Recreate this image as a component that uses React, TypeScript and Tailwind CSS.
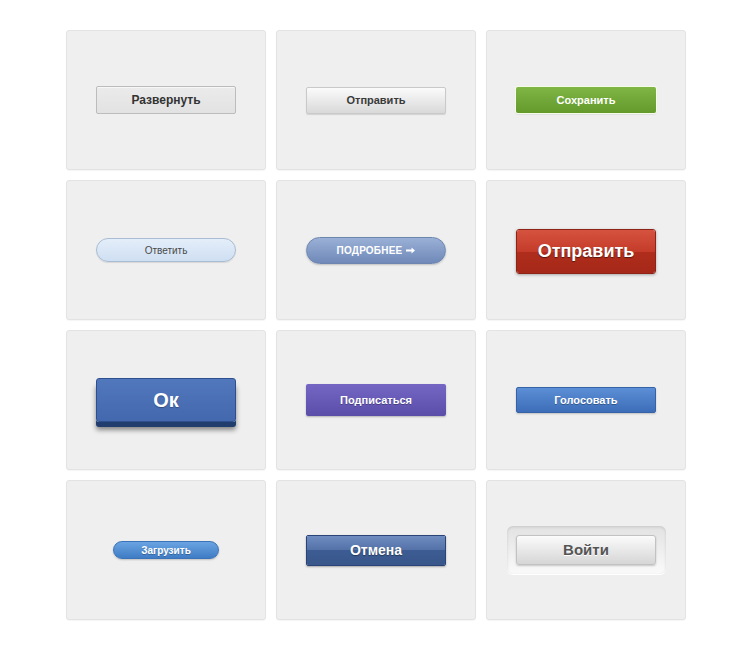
import React from 'react';

const font = { fontFamily: '"Liberation Sans", Arial, sans-serif' };

function Card({ children }: { children: React.ReactNode }) {
  return (
    <div className="h-[140px] rounded-[3px] border border-[#e3e3e3] bg-[#efefef] shadow-[0_1px_1px_rgba(0,0,0,0.04)] flex items-center justify-center">
      {children}
    </div>
  );
}

// short heavy right arrow used in the pill button
function Arrow() {
  return (
    <svg width="9" height="7" viewBox="0 0 9 7" className="inline-block ml-[4px] align-[0px]">
      <path d="M0 2.6h5.5V0.5L9 3.5 5.5 6.5V4.4H0z" fill="#fff" />
    </svg>
  );
}

export default function App() {
  return (
    <div className="w-[750px] h-[654px] bg-white pt-[30px] pl-[66px]" style={font}>
      <div className="grid grid-cols-[200px_200px_200px] auto-rows-[140px] gap-x-[10px] gap-y-[10px]">
        {/* row 1 */}
        <Card>
          <button className="w-[140px] h-[28px] rounded-[2px] border border-[#bcbcbc] bg-gradient-to-b from-[#ebebeb] to-[#e2e2e2] text-[12px] font-bold text-[#333] shadow-[inset_0_1px_0_#f7f7f7]">
            Развернуть
          </button>
        </Card>
        <Card>
          <button className="w-[140px] h-[27px] rounded-[2px] border border-[#c9c9c9] bg-gradient-to-b from-[#fbfbfb] to-[#d9d9d9] text-[11px] font-bold text-[#3a3a3a] shadow-[0_1px_1px_rgba(0,0,0,0.12)]">
            Отправить
          </button>
        </Card>
        <Card>
          <button className="w-[140px] h-[26px] rounded-[2px] bg-gradient-to-b from-[#7fb644] to-[#64992c] text-[11px] font-bold text-white shadow-[0_0_0_1px_#f6fbe9,0_1px_2px_rgba(0,0,0,0.2)]">
            Сохранить
          </button>
        </Card>

        {/* row 2 */}
        <Card>
          <button className="w-[140px] h-[24px] rounded-full border border-[#a9bcd3] bg-gradient-to-b from-[#e4eefa] to-[#cfdff2] text-[10px] text-[#4a4a4a] shadow-[0_1px_1px_rgba(0,0,0,0.1)]">
            Ответить
          </button>
        </Card>
        <Card>
          <button className="w-[140px] h-[27px] rounded-full border border-[#6d86b0] bg-gradient-to-b from-[#9ab0d6] to-[#6f89b8] text-[10px] font-bold text-white tracking-[0.2px] shadow-[0_1px_2px_rgba(0,0,0,0.2)]">
            ПОДРОБНЕЕ<Arrow />
          </button>
        </Card>
        <Card>
          <button className="relative w-[140px] h-[45px] mt-[3px] rounded-[3px] overflow-hidden border border-[#8e2418] text-[18px] font-bold text-white shadow-[0_1px_3px_rgba(0,0,0,0.3)] [text-shadow:0_1px_1px_rgba(0,0,0,0.5)]">
            <div className="absolute inset-0 flex flex-col">
              <div className="h-1/2 bg-gradient-to-b from-[#d5533f] to-[#c43b29]" />
              <div className="h-1/2 bg-gradient-to-b from-[#b02d1c] to-[#a52818]" />
            </div>
            <span className="relative">Отправить</span>
          </button>
        </Card>

        {/* row 3 */}
        <Card>
          <button className="w-[140px] h-[44px] rounded-[3px] border border-[#2e4f8e] bg-gradient-to-b from-[#5177bd] to-[#4468ad] text-[20px] font-bold text-white shadow-[0_5px_0_#213d6d,0_8px_5px_rgba(0,0,0,0.45)] [text-shadow:0_1px_1px_rgba(0,0,0,0.3)]">
            Ок
          </button>
        </Card>
        <Card>
          <button className="w-[140px] h-[32px] rounded-[2px] bg-gradient-to-b from-[#7566c4] to-[#5a4ea9] text-[11px] font-bold text-white shadow-[0_1px_2px_rgba(0,0,0,0.25)] [text-shadow:0_1px_0_rgba(0,0,0,0.3)]">
            Подписаться
          </button>
        </Card>
        <Card>
          <button className="w-[140px] h-[26px] rounded-[2px] border border-[#3563a8] bg-gradient-to-b from-[#5c8fd6] to-[#3d6db8] text-[11px] font-bold text-white shadow-[0_1px_2px_rgba(0,0,0,0.2)] [text-shadow:0_1px_0_rgba(0,0,0,0.3)]">
            Голосовать
          </button>
        </Card>

        {/* row 4 */}
        <Card>
          <button className="w-[106px] h-[18px] rounded-full border border-[#3b73b8] bg-gradient-to-b from-[#6aa4e2] to-[#3f7cc4] text-[10px] font-bold text-white shadow-[0_1px_2px_rgba(0,0,0,0.2)] [text-shadow:0_1px_0_rgba(0,0,0,0.25)]">
            Загрузить
          </button>
        </Card>
        <Card>
          <button className="relative w-[140px] h-[31px] rounded-[2px] overflow-hidden border border-[#2a4478] text-[14px] font-bold text-white shadow-[0_1px_2px_rgba(0,0,0,0.3)] [text-shadow:0_1px_1px_rgba(0,0,0,0.4)]">
            <div className="absolute inset-0 flex flex-col">
              <div className="h-1/2 bg-gradient-to-b from-[#6f8cc0] to-[#5472a8]" />
              <div className="h-1/2 bg-gradient-to-b from-[#3d5c94] to-[#385689]" />
            </div>
            <span className="relative">Отмена</span>
          </button>
        </Card>
        <Card>
          <div className="w-[159px] h-[48px] rounded-[6px] bg-gradient-to-b from-[#e2e2e2] to-[#fafafa] shadow-[inset_0_1px_3px_rgba(0,0,0,0.12),0_1px_0_#ffffff] flex items-center justify-center">
            <button className="w-[140px] h-[30px] rounded-[3px] border border-[#c2c2c2] bg-gradient-to-b from-[#fbfbfb] to-[#d6d6d6] text-[15px] font-bold text-[#555] shadow-[0_1px_2px_rgba(0,0,0,0.2)] [text-shadow:0_1px_0_#ffffff]">
              Войти
            </button>
          </div>
        </Card>
      </div>
    </div>
  );
}
